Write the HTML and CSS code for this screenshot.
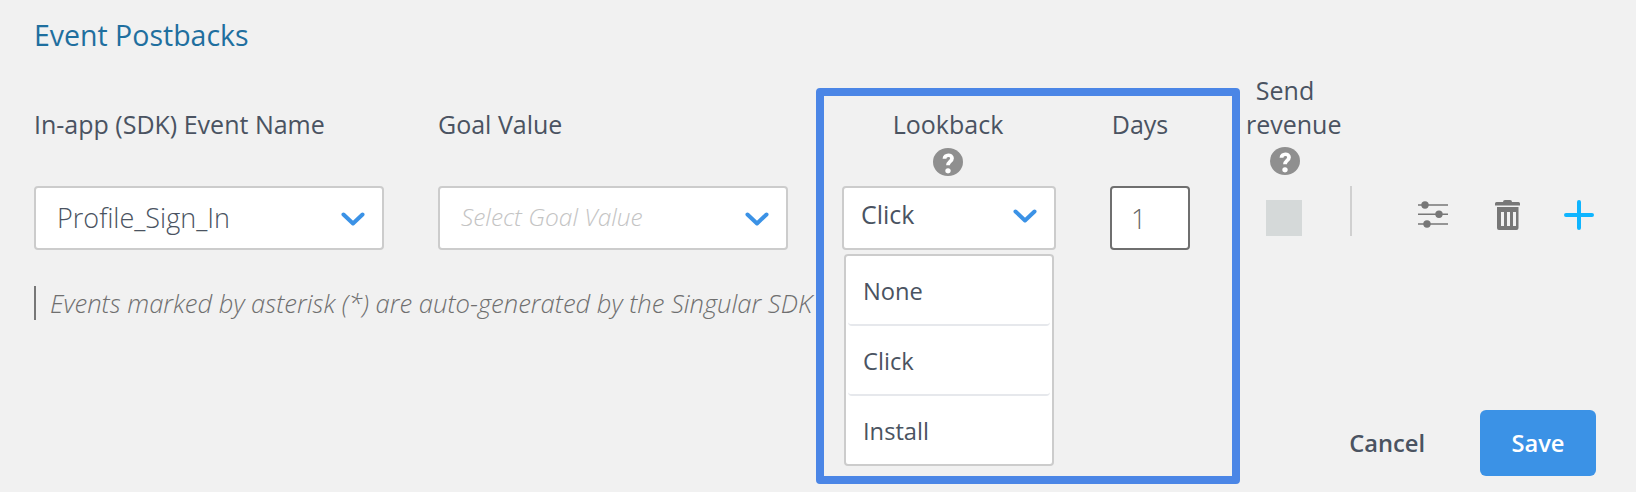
FILE: index.html
```html
<!DOCTYPE html>
<html lang="en">
<head>
  <meta charset="UTF-8" />
  <title>Event Postbacks</title>
  <link rel="stylesheet" href="styles.css">
</head>
<body>
  <h2 class="title">Event Postbacks</h2>

  <div class="form">
    <div class="left-col">
      <div class="fields">
        <div class="field">
          <div class="label">In-app (SDK) Event Name</div>
          <div class="select value-light">
            <span>Profile_Sign_In</span>
            <svg class="chevron" viewBox="0 0 24 14"><path d="M2.5 2.5 L12 11.5 L21.5 2.5"/></svg>
          </div>
        </div>
        <div class="field">
          <div class="label">Goal Value</div>
          <div class="select placeholder">
            <span>Select Goal Value</span>
            <svg class="chevron" viewBox="0 0 24 14"><path d="M2.5 2.5 L12 11.5 L21.5 2.5"/></svg>
          </div>
        </div>
      </div>
      <p class="note">Events marked by asterisk (*) are auto-generated by the Singular SDK</p>
    </div>

    <div class="highlight">
      <div class="lookback">
        <div class="head head-lookback">
          <div class="label">Lookback</div>
          <svg class="help" viewBox="0 0 30 30" preserveAspectRatio="none"><circle cx="15" cy="15" r="15"/><path class="help-curve" d="M11.500 11.500 C11.500 6.500 19 6.500 19 11 C19 14.500 15 14.500 15 18.500"/><circle class="help-dot" cx="15" cy="24.500" r="2.700"/></svg>
        </div>
        <div class="select select-lookback">
          <span>Click</span>
          <svg class="chevron" viewBox="0 0 24 14"><path d="M2.5 2.5 L12 11.5 L21.5 2.5"/></svg>
          <ul class="menu">
            <li>None</li>
            <li>Click</li>
            <li>Install</li>
          </ul>
        </div>
      </div>
      <div class="days">
        <div class="head head-days">
          <div class="label">Days</div>
        </div>
        <input class="days-input" type="text" value="1">
      </div>
    </div>

    <div class="right-col">
      <div class="top-row">
        <div class="revenue">
          <div class="head head-revenue">
            <div class="label">Send revenue</div>
            <svg class="help" viewBox="0 0 30 30" preserveAspectRatio="none"><circle cx="15" cy="15" r="15"/><path class="help-curve" d="M11.500 11.500 C11.500 6.500 19 6.500 19 11 C19 14.500 15 14.500 15 18.500"/><circle class="help-dot" cx="15" cy="24.500" r="2.700"/></svg>
          </div>
          <div class="checkbox"></div>
        </div>
        <div class="actions">
          <div class="divider"></div>
          <svg class="icon icon-sliders" viewBox="0 0 30 28">
            <path d="M0 4 H30 M0 13.300 H30 M0 23 H30"/>
            <circle cx="7" cy="4" r="3.700"/><circle cx="21" cy="13.300" r="3.700"/><circle cx="9" cy="23" r="3.700"/>
          </svg>
          <svg class="icon icon-trash" viewBox="0 0 25 30">
            <path fill-rule="evenodd" d="M8 2 Q8 0 10 0 H15 Q17 0 17 2 H23.500 Q25 2 25 3.500 V5.500 H0 V3.500 Q0 2 1.500 2 Z M2 7 H23.500 V28 Q23.500 30 21.500 30 H4 Q2 30 2 28 Z M6 12 V26 H9 V12 Z M12 12 V26 H15 V12 Z M18 12 V26 H21 V12 Z"/>
          </svg>
          <svg class="icon icon-plus" viewBox="0 0 30 30"><path d="M15 2 V28 M2 15 H28"/></svg>
        </div>
      </div>
      <div class="footer">
        <a class="cancel">Cancel</a>
        <button class="save">Save</button>
      </div>
    </div>
  </div>
</body>
</html>
```

FILE: styles.css
```css
* {
  margin: 0;
  padding: 0;
  box-sizing: border-box;
}

html, body {
  height: 100%;
  overflow: hidden;
}

body {
  background: #f1f1f1;
  color: #4a5361;
  font-family: "Open Sans", Arial, sans-serif;
  font-size: 25px;
  padding-left: 34px;
}

.title {
  font-size: 28.500px;
  font-weight: 400;
  line-height: 36px;
  color: #1f6f9f;
  padding-top: 17px;
  margin-bottom: 19px;
}

.form {
  display: flex;
  height: 420px;
}

.label {
  line-height: 35px;
}

/* left side */
.left-col {
  width: 754px;
  margin-right: 28px;
  padding-top: 35px;
}

.fields {
  display: flex;
  gap: 54px;
}

.field {
  width: 350px;
}

.field .label {
  margin-bottom: 44px;
}

.select {
  position: relative;
  display: flex;
  align-items: center;
  justify-content: space-between;
  height: 64px;
  padding: 0 17px 0 21px;
  background: #fff;
  border: 2px solid #ccc;
  border-radius: 4px;
}

.chevron {
  width: 24px;
  height: 14px;
  margin-top: 2px;
  fill: none;
  stroke: #3b92e6;
  stroke-width: 4;
  stroke-linecap: round;
  stroke-linejoin: round;
}

.value-light {
  font-size: 27px;
  font-weight: 300;
}

.value-light span {
  margin-top: -2px;
}

.placeholder {
  font-size: 24.500px;
  font-weight: 300;
  font-style: italic;
  color: #c4c4c4;
}

.placeholder span {
  margin-top: -3px;
}

.note {
  margin-top: 36px;
  height: 34px;
  line-height: 36px;
  padding-left: 14px;
  border-left: 2px solid #777;
  font-size: 25.600px;
  font-weight: 300;
  font-style: italic;
  color: #6f6f6f;
  white-space: nowrap;
}

/* blue box */
.highlight {
  display: flex;
  gap: 54px;
  width: 424px;
  height: 396px;
  margin-top: 16px;
  padding: 11px 18px 0;
  border: 8px solid #4b86e6;
  border-radius: 4px;
}

.head {
  height: 79px;
  text-align: center;
}

.head-lookback {
  padding-right: 2px;
}

.head-days {
  padding-right: 20px;
  white-space: nowrap;
}

.help {
  display: block;
  width: 30px;
  height: 28px;
  margin: 6px auto 0;
  fill: #8f8f8f;
}

.help-curve {
  fill: none;
  stroke: #fff;
  stroke-width: 3.800;
}

.help-dot {
  fill: #fff;
}

.lookback {
  width: 214px;
}

.select-lookback {
  padding: 0 17px 0 17px;
}

.select-lookback .chevron {
  margin-top: -5px;
}

.select-lookback span {
  margin-top: -8px;
}

.menu {
  position: absolute;
  top: 66px;
  left: 0;
  width: 210px;
  list-style: none;
  background: #fff;
  border: 2px solid #ccc;
  border-radius: 4px;
  font-size: 23.700px;
}

.menu li {
  height: 70px;
  line-height: 70px;
  margin: 0 2px;
  padding-left: 15px;
  border-bottom: 2px solid #e6e8ec;
  border-radius: 4px;
}

.menu li:last-child {
  height: 68px;
  border-bottom: 0;
}

.days {
  width: 80px;
  flex-shrink: 0;
}

.days-input {
  display: block;
  width: 80px;
  height: 64px;
  padding-left: 19px;
  background: #fff;
  border: 2px solid #6f6f6f;
  border-radius: 4px;
  font-family: inherit;
  font-size: 27px;
  font-weight: 300;
  color: #666;
}

/* right side */
.right-col {
  display: flex;
  flex-direction: column;
  justify-content: space-between;
  flex: 1;
  margin-left: 6px;
  padding-right: 40px;
  padding-bottom: 16px;
}

.top-row {
  display: flex;
}

.revenue {
  width: 78px;
}

.head-revenue {
  height: 114px;
}

.head-revenue .label {
  line-height: 34px;
  padding-top: 1px;
}

.checkbox {
  width: 36px;
  height: 36px;
  margin: 14px 0 0 20px;
  background: #d5d9d9;
}

.actions {
  display: flex;
  align-items: flex-start;
  padding-top: 114px;
  margin-left: 26px;
}

.divider {
  width: 2px;
  height: 50px;
  background: #d0d0d0;
}

.icon {
  display: block;
  fill: #777;
}

.icon-sliders {
  width: 30px;
  height: 28px;
  margin: 15px 0 0 66px;
  stroke: #777;
  stroke-width: 1.500;
}

.icon-sliders circle {
  stroke: none;
}

.icon-trash {
  width: 25px;
  height: 30px;
  margin: 14px 0 0 47px;
}

.icon-plus {
  width: 30px;
  height: 30px;
  margin: 14px 0 0 44px;
  fill: none;
  stroke: #0fb5ff;
  stroke-width: 4;
  stroke-linecap: round;
}

.footer {
  display: flex;
  align-items: center;
  justify-content: flex-end;
  gap: 55px;
}

.cancel {
  font-size: 23.700px;
  font-weight: 600;
}

.save {
  width: 116px;
  height: 66px;
  background: #3b92e6;
  border: 0;
  border-radius: 6px;
  color: #fff;
  font-family: inherit;
  font-size: 23.700px;
  font-weight: 600;
}
```
